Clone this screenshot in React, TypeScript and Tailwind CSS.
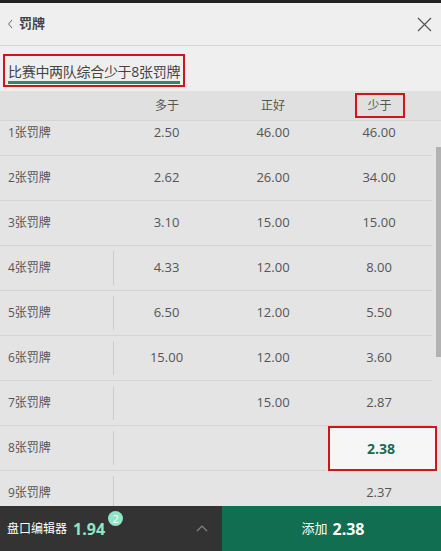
const rows: { label: string; over?: string; exact?: string; under: string; divider?: boolean }[] = [
  { label: '1张罚牌', over: '2.50', exact: '46.00', under: '46.00' },
  { label: '2张罚牌', over: '2.62', exact: '26.00', under: '34.00' },
  { label: '3张罚牌', over: '3.10', exact: '15.00', under: '15.00' },
  { label: '4张罚牌', over: '4.33', exact: '12.00', under: '8.00', divider: true },
  { label: '5张罚牌', over: '6.50', exact: '12.00', under: '5.50', divider: true },
  { label: '6张罚牌', over: '15.00', exact: '12.00', under: '3.60', divider: true },
  { label: '7张罚牌', exact: '15.00', under: '2.87', divider: true },
  { label: '8张罚牌', under: '2.38', divider: true },
  { label: '9张罚牌', under: '2.37', divider: true }
]

const font = { fontFamily: '"Open Sans", "Noto Sans CJK SC", sans-serif' }

export default function App() {
  return (
    <div className="flex h-[551px] w-[441px] flex-col overflow-hidden bg-[#e4e4e4] text-[#555]" style={font}>
      <div className="h-[3px] bg-[#222]" />
      <div className="flex h-[43px] items-center justify-between border-b border-[#d4d4d4] bg-[#efefef] pl-[7px] pr-[9px]">
        <div className="flex items-center gap-[5px] text-[13px] font-bold text-[#444]">
          <svg width="7" height="10" viewBox="0 0 7 10" fill="none" stroke="#666" strokeWidth="1">
            <path d="M5 1 L1.5 5 L5 9" />
          </svg>
          <span>罚牌</span>
        </div>
        <svg width="15" height="15" viewBox="0 0 15 15" stroke="#555" strokeWidth="1.2">
          <path d="M1 1 L14 14 M14 1 L1 14" />
        </svg>
      </div>
      <div className="flex h-[45px] items-center bg-[#efefef] px-[3px] pt-[3px]">
        <div className="border-2 border-[#d0161b] px-[3px] pb-[2px] pt-[3px]">
          <span className="border-b-[3px] border-[#2b8a6e] text-[14px] leading-[22px] tracking-[-0.3px] text-[#444]">比赛中两队综合少于8张罚牌</span>
        </div>
      </div>
      <div className="grid h-[30px] grid-cols-[114px_106px_106px_106px_9px] items-center border-b border-[#d4d4d4] bg-[#e0e0e0] text-[12px] text-[#555]">
        <span />
        <span className="text-center">多于</span>
        <span className="text-center">正好</span>
        <span className="flex justify-center pl-[1px]">
          <span className="flex h-[25px] w-[50px] items-center justify-center border-2 border-[#d0161b]">少于</span>
        </span>
        <span />
      </div>
      <div className="relative flex-1 overflow-hidden">
        <div className="-mt-[10px]">
          {rows.map((r) => (
            <div key={r.label} className="grid h-[45px] grid-cols-[114px_106px_106px_106px_9px] text-[13px]">
              <div className="flex items-center justify-between border-b border-[#d4d4d4] py-[5px] pl-[8px]">
                <span className="text-[12px] text-[#555]">{r.label}</span>
                {r.divider ? <span className="h-full w-px bg-[#cccccc]" /> : null}
              </div>
              <div className="flex items-center justify-center border-b border-[#d4d4d4] pr-[1px]">{r.over}</div>
              <div className="flex items-center justify-center border-b border-[#d4d4d4]">{r.exact}</div>
              {r.label === '8张罚牌' ? (
                <div className="-mr-[5px] ml-[2px] flex items-center justify-center border-2 border-[#d0161b] bg-[#f6f6f6] pr-[3px] text-[14px] font-bold text-[#1c6b54]">
                  {r.under}
                </div>
              ) : (
                <div className="flex items-center justify-center border-b border-[#d4d4d4]">{r.under}</div>
              )}
              <div />
            </div>
          ))}
        </div>
        <div className="absolute right-0 top-[26px] h-[210px] w-[5px] bg-[#b2b2b2]" />
      </div>
      <div className="flex h-[45px] shrink-0">
        <div className="flex w-[222px] items-center bg-[#333] pl-[7px] pr-[14px]">
          <span className="text-[12px] text-white">盘口编辑器</span>
          <span className="ml-[6px] text-[16px] font-bold text-[#8ee6c6]">1.94</span>
          <span className="mb-[20px] ml-[3px] flex h-[15px] w-[15px] items-center justify-center rounded-full bg-[#8ee6c6] text-[11px] leading-none text-white">2</span>
          <svg className="ml-auto" width="12" height="7" viewBox="0 0 12 7" fill="none" stroke="#888" strokeWidth="1.2">
            <path d="M1 6 L6 1 L11 6" />
          </svg>
        </div>
        <div className="flex flex-1 items-center justify-center bg-[#126e51] pl-[3px] text-white">
          <span className="text-[13px]">添加</span>
          <span className="ml-[5px] text-[16px] font-bold">2.38</span>
        </div>
      </div>
    </div>
  )
}
